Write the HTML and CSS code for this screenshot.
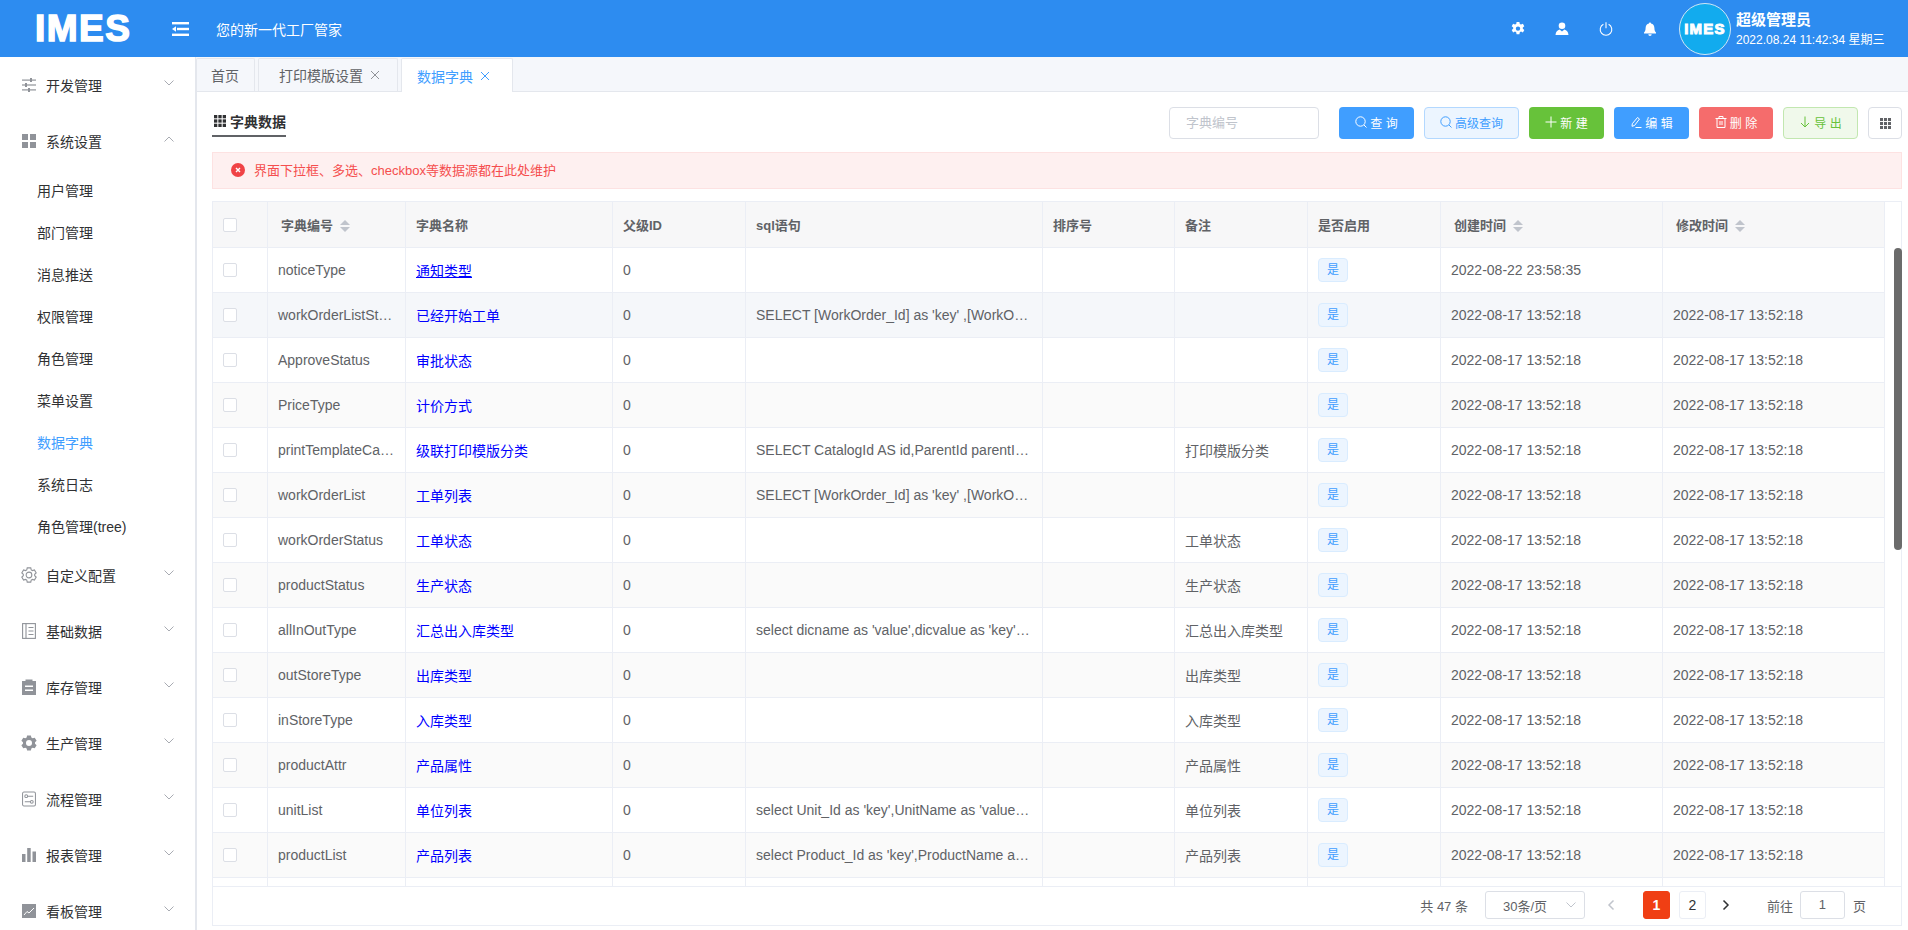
FILE: index.html
```html
<!DOCTYPE html>
<html lang="zh-CN">
<head>
  <meta charset="UTF-8">
  <meta name="viewport" content="width=device-width, initial-scale=1.0">
  <title>数据字典</title>
  <link rel="stylesheet" href="styles.css">
</head>
<body>
  <header class="topbar">
    <div class="logo">IMES</div>
    <svg class="toggle" viewBox="0 0 17 14" fill="#fff"><rect width="17" height="2.4"/><rect x="5" y="5.8" width="12" height="2.4"/><rect y="11.6" width="17" height="2.4"/><path d="M4 4.2v5.6L0 7z"/></svg>
    <div class="slogan">您的新一代工厂管家</div>
    <div class="top-actions">
      <svg class="top-icon" viewBox="0 0 14 14" fill="#fff"><path fill-rule="evenodd" d="M5.600 0h2.800l.4 2 1.200.6 1.900-.8 1.400 2.400-1.500 1.300v1.200l1.500 1.300-1.400 2.400-1.900-.8-1.200.6-.4 2H5.600l-.4-2-1.200-.6-1.900.8L.7 8l1.500-1.300V5.500L.7 4.200l1.400-2.400 1.900.8 1.200-.6zM7 4.400a2.200 2.200 0 1 0 0 4.400 2.200 2.200 0 0 0 0-4.400z"/></svg>
      <svg class="top-icon" viewBox="0 0 14 14" fill="#fff"><circle cx="7" cy="3.800" r="3.300"/><path d="M4.600 7.600 7 9.600l2.400-2c2.200.5 3.800 2.400 4.100 5.400H.5c.3-3 1.900-4.900 4.100-5.400z"/></svg>
      <svg class="top-icon" viewBox="0 0 14 14" fill="none" stroke="#fff" stroke-width="1.100"><path d="M4.400 2.300a5.800 5.800 0 1 0 5.200 0"/><path d="M7 .2v6"/></svg>
      <svg class="top-icon" viewBox="0 0 14 14" fill="#fff"><path d="M7 .6c.6 0 1 .4 1 1 2.200.5 3.400 2.300 3.400 4.400 0 2.400.6 3.600 1.600 4.600v.8H1v-.8C2 9.600 2.600 8.400 2.600 6c0-2.100 1.200-3.900 3.400-4.400 0-.6.400-1 1-1zM5.300 12.200h3.400a1.700 1.700 0 0 1-3.400 0z"/></svg>
    </div>
    <div class="avatar"><span class="avatar-logo">IMES</span></div>
    <div class="user-info">
      <div class="user-name">超级管理员</div>
      <div class="user-time">2022.08.24 11:42:34 星期三</div>
    </div>
  </header>

  <div class="layout">
    <aside class="sidebar">
      <div class="menu-group">
        <svg class="menu-icon" viewBox="0 0 14 14" fill="#909399"><rect y="1.500" width="14" height="1.200"/><rect x="8" y="0" width="2" height="4"/><rect y="6.400" width="14" height="1.200"/><rect x="3" y="5" width="2" height="4"/><rect y="11.300" width="14" height="1.200"/><rect x="6" y="10" width="2" height="4"/></svg>
        <span>开发管理</span>
        <svg class="menu-arrow" viewBox="0 0 10 6" fill="none" stroke="#a8abb2"><path d="M.5.500 5 5 9.500.500"/></svg>
      </div>
      <div class="menu-group">
        <svg class="menu-icon" viewBox="0 0 14 14" fill="#909399"><rect width="6" height="6"/><rect x="8" width="6" height="6"/><rect y="8" width="6" height="6"/><rect x="8" y="8" width="6" height="6"/></svg>
        <span>系统设置</span>
        <svg class="menu-arrow" viewBox="0 0 10 6" fill="none" stroke="#a8abb2"><path d="M.5 5.500 5 1l4.500 4.500"/></svg>
      </div>
      <a class="menu-item">用户管理</a>
      <a class="menu-item">部门管理</a>
      <a class="menu-item">消息推送</a>
      <a class="menu-item">权限管理</a>
      <a class="menu-item">角色管理</a>
      <a class="menu-item">菜单设置</a>
      <a class="menu-item active">数据字典</a>
      <a class="menu-item">系统日志</a>
      <a class="menu-item">角色管理(tree)</a>
      <div class="menu-group">
        <svg class="menu-icon menu-icon-lg" viewBox="-1 -1 18 18" fill="none" stroke="#909399" stroke-width="1.200"><path d="M6 0h4l.5 2.200 1.400.8 2.200-.7 2 3.400-1.700 1.500v1.600l1.700 1.500-2 3.400-2.200-.7-1.400.8L10 16H6l-.5-2.200-1.400-.8-2.200.7-2-3.400 1.700-1.500V7.200L-.1 5.700l2-3.400 2.200.7 1.400-.8z"/><circle cx="8" cy="8" r="3.200"/></svg>
        <span>自定义配置</span>
        <svg class="menu-arrow" viewBox="0 0 10 6" fill="none" stroke="#a8abb2"><path d="M.5.500 5 5 9.500.500"/></svg>
      </div>
      <div class="menu-group">
        <svg class="menu-icon menu-icon-tall" viewBox="0 0 14 16" fill="none" stroke="#909399" stroke-width="1.100"><rect x=".6" y=".6" width="12.800" height="14.800"/><path d="M4 .6v14.800M6.500 4.500h5M6.500 8h5M6.500 11.500h5"/></svg>
        <span>基础数据</span>
        <svg class="menu-arrow" viewBox="0 0 10 6" fill="none" stroke="#a8abb2"><path d="M.5.500 5 5 9.500.500"/></svg>
      </div>
      <div class="menu-group">
        <svg class="menu-icon menu-icon-tall" viewBox="0 0 14 16" fill="#909399"><path fill-rule="evenodd" d="M0 2h3.500V.5h7V2H14v14H0zM3 6.500v1.400h8V6.500zM3 10.500v1.400h8v-1.400z"/></svg>
        <span>库存管理</span>
        <svg class="menu-arrow" viewBox="0 0 10 6" fill="none" stroke="#a8abb2"><path d="M.5.500 5 5 9.500.500"/></svg>
      </div>
      <div class="menu-group">
        <svg class="menu-icon menu-icon-lg" viewBox="-.5 0 17 16" fill="#909399"><path fill-rule="evenodd" d="M6 0h4l.5 2.200 1.400.8 2.200-.7 2 3.400-1.700 1.500v1.600l1.700 1.500-2 3.400-2.200-.7-1.400.8L10 16H6l-.5-2.200-1.400-.8-2.200.7-2-3.400 1.700-1.500V7.200L-.1 5.700l2-3.400 2.200.7 1.400-.8zM8 4.800a3.200 3.200 0 1 0 0 6.400 3.200 3.200 0 0 0 0-6.400z"/></svg>
        <span>生产管理</span>
        <svg class="menu-arrow" viewBox="0 0 10 6" fill="none" stroke="#a8abb2"><path d="M.5.500 5 5 9.500.500"/></svg>
      </div>
      <div class="menu-group">
        <svg class="menu-icon menu-icon-tall" viewBox="0 0 15 16" fill="none" stroke="#909399" stroke-width="1.100"><rect x=".6" y=".6" width="13.800" height="14.800" rx="1.500"/><circle cx="4.500" cy="5" r="1.500"/><path d="M6 5h6M3 11h6"/><circle cx="10.500" cy="11" r="1.500"/></svg>
        <span>流程管理</span>
        <svg class="menu-arrow" viewBox="0 0 10 6" fill="none" stroke="#a8abb2"><path d="M.5.500 5 5 9.500.500"/></svg>
      </div>
      <div class="menu-group">
        <svg class="menu-icon" viewBox="0 0 14 14" fill="#909399"><rect y="6" width="3.500" height="8"/><rect x="5.200" width="3.500" height="14"/><rect x="10.500" y="3.500" width="3.500" height="10.500"/></svg>
        <span>报表管理</span>
        <svg class="menu-arrow" viewBox="0 0 10 6" fill="none" stroke="#a8abb2"><path d="M.5.500 5 5 9.500.500"/></svg>
      </div>
      <div class="menu-group">
        <svg class="menu-icon" viewBox="0 0 14 14"><rect width="14" height="14" fill="#909399"/><path d="M2 11l3-3.500 2 1.500 5-5" fill="none" stroke="#fff"/></svg>
        <span>看板管理</span>
        <svg class="menu-arrow" viewBox="0 0 10 6" fill="none" stroke="#a8abb2"><path d="M.5.500 5 5 9.500.500"/></svg>
      </div>
    </aside>

    <main class="main">
      <nav class="tabs">
        <div class="tab tab-home">首页</div>
        <div class="tab tab-print">打印模版设置<svg class="tab-close" viewBox="0 0 10 10" fill="none" stroke="#909399"><path d="M1 1l8 8M9 1l-8 8"/></svg></div>
        <div class="tab tab-active">数据字典<svg class="tab-close" viewBox="0 0 10 10" fill="none" stroke="#409eff"><path d="M1 1l8 8M9 1l-8 8"/></svg></div>
      </nav>

      <section class="panel">
        <div class="toolbar">
          <div class="panel-title">
            <svg class="title-icon" viewBox="0 0 12 12" fill="#303133"><rect width="3.300" height="3.300"/><rect x="4.350" width="3.300" height="3.300"/><rect x="8.700" width="3.300" height="3.300"/><rect y="4.350" width="3.300" height="3.300"/><rect x="4.350" y="4.350" width="3.300" height="3.300"/><rect x="8.700" y="4.350" width="3.300" height="3.300"/><rect y="8.700" width="3.300" height="3.300"/><rect x="4.350" y="8.700" width="3.300" height="3.300"/><rect x="8.700" y="8.700" width="3.300" height="3.300"/></svg>
            字典数据
          </div>
          <div class="actions">
            <div class="search-input">字典编号</div>
            <button class="btn btn-primary"><svg class="btn-icon" viewBox="0 0 12 12" fill="none" stroke="currentColor"><circle cx="5.500" cy="5.500" r="4.700"/><path d="M9 9l2.500 2.500"/></svg>查 询</button>
            <button class="btn btn-primary-plain btn-wide"><svg class="btn-icon" viewBox="0 0 12 12" fill="none" stroke="currentColor"><circle cx="5.500" cy="5.500" r="4.700"/><path d="M9 9l2.500 2.500"/></svg>高级查询</button>
            <button class="btn btn-success"><svg class="btn-icon" viewBox="0 0 12 12" fill="none" stroke="currentColor"><path d="M6 .5v11M.5 6h11"/></svg>新 建</button>
            <button class="btn btn-primary"><svg class="btn-icon" viewBox="0 0 12 12" fill="none" stroke="currentColor"><path d="M7.500 1.500l2 1.500-5 6.500-2.500.8.300-2.600zM5.500 11.500h6"/></svg>编 辑</button>
            <button class="btn btn-danger"><svg class="btn-icon" viewBox="0 0 12 12" fill="none" stroke="currentColor"><path d="M.5 2.500h11M4 2.500v-2h4v2M2 2.500v9h8v-9M5 5v4M7 5v4"/></svg>删 除</button>
            <button class="btn btn-success-plain"><svg class="btn-icon" viewBox="0 0 12 12" fill="none" stroke="currentColor"><path d="M6 .5v10.500M2 7l4 4 4-4"/></svg>导 出</button>
            <button class="btn btn-grid"><svg class="title-icon" viewBox="0 0 12 12" fill="#606266"><rect width="3.300" height="3.300"/><rect x="4.350" width="3.300" height="3.300"/><rect x="8.700" width="3.300" height="3.300"/><rect y="4.350" width="3.300" height="3.300"/><rect x="4.350" y="4.350" width="3.300" height="3.300"/><rect x="8.700" y="4.350" width="3.300" height="3.300"/><rect y="8.700" width="3.300" height="3.300"/><rect x="4.350" y="8.700" width="3.300" height="3.300"/><rect x="8.700" y="8.700" width="3.300" height="3.300"/></svg></button>
          </div>
        </div>

        <div class="alert">
          <svg class="alert-icon" viewBox="0 0 14 14"><circle cx="7" cy="7" r="7" fill="#f04346"/><path d="M5 5l4 4M9 5l-4 4" stroke="#fff" stroke-width="1.400"/></svg>
          界面下拉框、多选、checkbox等数据源都在此处维护
        </div>

        <div class="table-box">
          <div class="table-scroll">
            <div class="table-clip">
              <table class="dict-table">
                <colgroup>
                  <col class="col-check"><col class="col-code"><col class="col-name"><col class="col-parent"><col class="col-sql"><col class="col-sort"><col class="col-remark"><col class="col-enable"><col class="col-time"><col class="col-time">
                </colgroup>
                <thead>
                  <tr>
                    <th><span class="check"></span></th>
                    <th class="th-indent">字典编号<span class="sorter"></span></th>
                    <th>字典名称</th>
                    <th>父级ID</th>
                    <th>sql语句</th>
                    <th>排序号</th>
                    <th>备注</th>
                    <th>是否启用</th>
                    <th class="th-indent">创建时间<span class="sorter"></span></th>
                    <th class="th-indent">修改时间<span class="sorter"></span></th>
                  </tr>
                </thead>
                <tbody>
                  <tr><td><span class="check"></span></td><td class="td-code">noticeType</td><td><a class="link-hover" href="#">通知类型</a></td><td>0</td><td></td><td></td><td></td><td><span class="tag">是</span></td><td>2022-08-22 23:58:35</td><td></td></tr>
                  <tr class="row-hover"><td><span class="check"></span></td><td class="td-code">workOrderListStarted</td><td><a href="#">已经开始工单</a></td><td>0</td><td>SELECT [WorkOrder_Id] as 'key' ,[WorkOrder_No] as 'value' FROM</td><td></td><td></td><td><span class="tag">是</span></td><td>2022-08-17 13:52:18</td><td>2022-08-17 13:52:18</td></tr>
                  <tr><td><span class="check"></span></td><td class="td-code">ApproveStatus</td><td><a href="#">审批状态</a></td><td>0</td><td></td><td></td><td></td><td><span class="tag">是</span></td><td>2022-08-17 13:52:18</td><td>2022-08-17 13:52:18</td></tr>
                  <tr><td><span class="check"></span></td><td class="td-code">PriceType</td><td><a href="#">计价方式</a></td><td>0</td><td></td><td></td><td></td><td><span class="tag">是</span></td><td>2022-08-17 13:52:18</td><td>2022-08-17 13:52:18</td></tr>
                  <tr><td><span class="check"></span></td><td class="td-code">printTemplateCatalog</td><td><a href="#">级联打印模版分类</a></td><td>0</td><td>SELECT CatalogId AS id,ParentId parentId,CatalogName AS name</td><td></td><td>打印模版分类</td><td><span class="tag">是</span></td><td>2022-08-17 13:52:18</td><td>2022-08-17 13:52:18</td></tr>
                  <tr><td><span class="check"></span></td><td class="td-code">workOrderList</td><td><a href="#">工单列表</a></td><td>0</td><td>SELECT [WorkOrder_Id] as 'key' ,[WorkOrder_No] as 'value' FROM</td><td></td><td></td><td><span class="tag">是</span></td><td>2022-08-17 13:52:18</td><td>2022-08-17 13:52:18</td></tr>
                  <tr><td><span class="check"></span></td><td class="td-code">workOrderStatus</td><td><a href="#">工单状态</a></td><td>0</td><td></td><td></td><td>工单状态</td><td><span class="tag">是</span></td><td>2022-08-17 13:52:18</td><td>2022-08-17 13:52:18</td></tr>
                  <tr><td><span class="check"></span></td><td class="td-code">productStatus</td><td><a href="#">生产状态</a></td><td>0</td><td></td><td></td><td>生产状态</td><td><span class="tag">是</span></td><td>2022-08-17 13:52:18</td><td>2022-08-17 13:52:18</td></tr>
                  <tr><td><span class="check"></span></td><td class="td-code">allInOutType</td><td><a href="#">汇总出入库类型</a></td><td>0</td><td>select dicname as 'value',dicvalue as 'key' from sys_dictionary</td><td></td><td>汇总出入库类型</td><td><span class="tag">是</span></td><td>2022-08-17 13:52:18</td><td>2022-08-17 13:52:18</td></tr>
                  <tr><td><span class="check"></span></td><td class="td-code">outStoreType</td><td><a href="#">出库类型</a></td><td>0</td><td></td><td></td><td>出库类型</td><td><span class="tag">是</span></td><td>2022-08-17 13:52:18</td><td>2022-08-17 13:52:18</td></tr>
                  <tr><td><span class="check"></span></td><td class="td-code">inStoreType</td><td><a href="#">入库类型</a></td><td>0</td><td></td><td></td><td>入库类型</td><td><span class="tag">是</span></td><td>2022-08-17 13:52:18</td><td>2022-08-17 13:52:18</td></tr>
                  <tr><td><span class="check"></span></td><td class="td-code">productAttr</td><td><a href="#">产品属性</a></td><td>0</td><td></td><td></td><td>产品属性</td><td><span class="tag">是</span></td><td>2022-08-17 13:52:18</td><td>2022-08-17 13:52:18</td></tr>
                  <tr><td><span class="check"></span></td><td class="td-code">unitList</td><td><a href="#">单位列表</a></td><td>0</td><td>select Unit_Id as 'key',UnitName as 'value' from Sys_Unit</td><td></td><td>单位列表</td><td><span class="tag">是</span></td><td>2022-08-17 13:52:18</td><td>2022-08-17 13:52:18</td></tr>
                  <tr><td><span class="check"></span></td><td class="td-code">productList</td><td><a href="#">产品列表</a></td><td>0</td><td>select Product_Id as 'key',ProductName as 'value' from Product</td><td></td><td>产品列表</td><td><span class="tag">是</span></td><td>2022-08-17 13:52:18</td><td>2022-08-17 13:52:18</td></tr>
                  <tr><td></td><td></td><td></td><td></td><td></td><td></td><td></td><td></td><td></td><td></td></tr>
                </tbody>
              </table>
            </div>
            <div class="scroll-gutter"><div class="scroll-thumb"></div></div>
          </div>

          <footer class="pager">
            <span>共 47 条</span>
            <div class="page-size">30条/页<svg class="page-size-arrow" viewBox="0 0 10 6" fill="none" stroke="#c0c4cc"><path d="M.5.500 5 5 9.500.500"/></svg></div>
            <svg class="page-arrow page-prev" viewBox="0 0 8 12" fill="none" stroke="#c0c4cc" stroke-width="1.500"><path d="M6.500 1.500 2 6l4.500 4.500"/></svg>
            <div class="page-num page-current">1</div>
            <div class="page-num">2</div>
            <svg class="page-arrow page-next" viewBox="0 0 8 12" fill="none" stroke="#303133" stroke-width="1.500"><path d="M1.500 1.500 6 6l-4.500 4.500"/></svg>
            <span class="goto-label">前往</span>
            <div class="goto-input">1</div>
            <span class="goto-unit">页</span>
          </footer>
        </div>
      </section>
    </main>
  </div>
</body>
</html>
```

FILE: styles.css
```css
* {
  box-sizing: border-box;
}

html, body {
  height: 100%;
}

body {
  margin: 0;
  display: flex;
  flex-direction: column;
  overflow: hidden;
  font-family: "Liberation Sans", "Noto Sans CJK SC", sans-serif;
  font-size: 14px;
  color: #606266;
  background-color: #fff;
}

/* top bar */
.topbar {
  flex: 0 0 57px;
  display: flex;
  align-items: center;
  background-color: #2d8cf0;
  color: #fff;
}

.logo {
  width: 172px;
  padding-left: 35px;
  font-size: 37px;
  line-height: 37px;
  font-weight: bold;
  letter-spacing: 1.5px;
  -webkit-text-stroke: 1.5px #fff;
}

.toggle {
  width: 17px;
  height: 14px;
}

.slogan {
  margin-left: 27px;
}

.top-actions {
  margin-left: auto;
  display: flex;
  gap: 30px;
}

.top-icon {
  width: 14px;
  height: 14px;
  display: block;
}

.avatar {
  width: 52px;
  height: 52px;
  margin-left: 22px;
  display: flex;
  align-items: center;
  justify-content: center;
  border: 1.5px solid #cfe6f5;
  border-radius: 50%;
  background-color: #12abee;
}

.avatar-logo {
  font-size: 15px;
  font-weight: bold;
  letter-spacing: 1.2px;
  -webkit-text-stroke: 1px #fff;
}

.user-info {
  width: 177px;
  padding-left: 5px;
}

.user-name {
  font-size: 15px;
  line-height: 20px;
  font-weight: bold;
}

.user-time {
  margin-top: 2px;
  font-size: 12px;
  line-height: 16px;
}

.layout {
  flex: 1;
  display: flex;
  min-height: 0;
}

/* sidebar */
.sidebar {
  flex: 0 0 197px;
  padding-top: 1px;
  overflow: hidden;
  border-right: 2px solid #e4e7ed;
  color: #303133;
}

.menu-group {
  height: 56px;
  display: flex;
  align-items: center;
  padding-left: 22px;
  padding-bottom: 2px;
}

.menu-icon {
  width: 14px;
  height: 14px;
  margin-right: 10px;
  flex-shrink: 0;
}

.menu-icon-lg {
  width: 16px;
  height: 16px;
  margin-left: -1px;
  margin-right: 9px;
}

.menu-icon-tall {
  height: 16px;
}

.menu-arrow {
  width: 10px;
  height: 6px;
  margin-left: auto;
  margin-right: 21px;
  margin-bottom: 4px;
}

.menu-item {
  display: block;
  height: 42px;
  line-height: 42px;
  padding-left: 37px;
}

.menu-item.active {
  color: #409eff;
}

/* tabs */
.main {
  flex: 1;
  min-width: 0;
  display: flex;
  flex-direction: column;
}

.tabs {
  flex: 0 0 35px;
  display: flex;
  gap: 3px;
  padding-top: 1px;
  margin-left: -1px;
  background-color: #f5f7fb;
  border-bottom: 1px solid #e4e7ed;
}

.tab {
  height: 33px;
  display: flex;
  align-items: center;
  border: 1px solid #e4e7ed;
  border-bottom: 0;
  border-radius: 2px 2px 0 0;
}

.tab-home {
  padding: 0 15px 0 14px;
}

.tab-print {
  padding: 0 17px 0 20px;
}

.tab-active {
  padding: 0 22px 0 15px;
  height: 34px;
  margin-bottom: -1px;
  color: #409eff;
  background-color: #fff;
}

.tab-close {
  width: 10px;
  height: 10px;
  margin-left: 7px;
}

/* panel */
.panel {
  flex: 1;
  min-height: 0;
  display: flex;
  flex-direction: column;
  padding: 15px 6px 4px 15px;
}

.toolbar {
  flex: 0 0 32px;
  display: flex;
  justify-content: space-between;
  margin-bottom: 13px;
}

.panel-title {
  width: 74px;
  height: 30px;
  display: flex;
  align-items: center;
  gap: 4px;
  padding-left: 2px;
  border-bottom: 2px solid #606266;
  font-weight: bold;
  color: #303133;
}

.title-icon {
  width: 12px;
  height: 12px;
  display: block;
  flex-shrink: 0;
}

.actions {
  display: flex;
  gap: 10px;
}

.search-input {
  width: 150px;
  height: 32px;
  margin-right: 10px;
  padding-left: 16px;
  line-height: 30px;
  font-size: 13px;
  color: #c0c4cc;
  border: 1px solid #dcdfe6;
  border-radius: 4px;
}

.btn {
  width: 75px;
  height: 32px;
  display: flex;
  align-items: center;
  justify-content: center;
  padding: 0 0 2px;
  font-family: inherit;
  font-size: 12px;
  border: 1px solid transparent;
  border-radius: 4px;
  color: #fff;
}

.btn-icon {
  width: 12px;
  height: 12px;
  margin-right: 3px;
  flex-shrink: 0;
}

.btn-wide {
  width: 95px;
}

.btn-primary {
  background-color: #409eff;
}

.btn-primary-plain {
  color: #409eff;
  background-color: #ecf5ff;
  border-color: #b3d8ff;
}

.btn-success {
  background-color: #67c23a;
}

.btn-danger {
  width: 74px;
  background-color: #f56c6c;
}

.btn-success-plain {
  color: #67c23a;
  background-color: #f0f9eb;
  border-color: #c2e7b0;
}

.btn-grid {
  width: 34px;
  padding: 0;
  background-color: #fff;
  border-color: #dcdfe6;
}

.btn-grid .title-icon {
  width: 11px;
  height: 11px;
}

/* alert */
.alert {
  flex: 0 0 37px;
  display: flex;
  align-items: center;
  padding-left: 18px;
  padding-bottom: 2px;
  margin-bottom: 12px;
  font-size: 13px;
  color: #f54e4e;
  background-color: #fef0f0;
  border: 1px solid #fde2e2;
}

.alert-icon {
  width: 14px;
  height: 14px;
  margin-right: 9px;
}

/* table */
.table-box {
  flex: 1;
  min-height: 0;
  display: flex;
  flex-direction: column;
  border: 1px solid #ebeef5;
}

.table-scroll {
  flex: 1;
  min-height: 0;
  display: flex;
}

.table-clip {
  flex: 0 0 1672px;
  overflow: hidden;
}

.dict-table {
  width: 1672px;
  table-layout: fixed;
  border-collapse: separate;
  border-spacing: 0;
  font-size: 14px;
}

.col-check { width: 55px; }
.col-code { width: 138px; }
.col-name { width: 207px; }
.col-parent { width: 133px; }
.col-sql { width: 297px; }
.col-sort { width: 132px; }
.col-remark { width: 133px; }
.col-enable { width: 133px; }
.col-time { width: 222px; }

.dict-table th, .dict-table td {
  padding: 0 12px 0 10px;
  text-align: left;
  white-space: nowrap;
  overflow: hidden;
  text-overflow: ellipsis;
  border-right: 1px solid #ebeef5;
  border-bottom: 1px solid #ebeef5;
}

.dict-table th {
  height: 46px;
  font-size: 13px;
  font-weight: bold;
  background-color: #f7f7f8;
}

.dict-table th.th-indent {
  padding-left: 13px;
}

.dict-table td {
  height: 45px;
}

.dict-table td.td-code {
  padding-right: 9px;
}

.dict-table tbody tr:nth-child(even) td {
  background-color: #fafafa;
}

.dict-table tbody tr.row-hover td {
  background-color: #f5f7fa;
}

.dict-table a {
  color: #0000ff;
  text-decoration: none;
}

.dict-table a.link-hover {
  text-decoration: underline;
  text-underline-offset: 1px;
}

.check {
  display: block;
  width: 14px;
  height: 14px;
  background-color: #fff;
  border: 1px solid #dcdfe6;
  border-radius: 2px;
}

.sorter {
  display: inline-block;
  position: relative;
  width: 10px;
  height: 12px;
  margin-left: 7px;
  vertical-align: -2px;
}

.sorter::before, .sorter::after {
  content: "";
  position: absolute;
  left: 0;
  border-left: 5px solid transparent;
  border-right: 5px solid transparent;
}

.sorter::before {
  top: 0;
  border-bottom: 5px solid #c0c4cc;
}

.sorter::after {
  bottom: 0;
  border-top: 5px solid #c0c4cc;
}

.tag {
  display: block;
  width: 30px;
  height: 24px;
  line-height: 22px;
  text-align: center;
  font-size: 12px;
  color: #409eff;
  background-color: #ecf5ff;
  border: 1px solid #d9ecff;
  border-radius: 4px;
}

.scroll-gutter {
  flex: 1;
  padding: 46px 0 0 9px;
}

.scroll-thumb {
  width: 8px;
  height: 302px;
  background-color: #6b6b6b;
  border-radius: 4px;
}

/* pagination */
.pager {
  flex: 0 0 39px;
  display: flex;
  align-items: center;
  justify-content: flex-end;
  padding-right: 35px;
  padding-bottom: 2px;
  font-size: 13px;
  border-top: 1px solid #ebeef5;
}

.page-size {
  width: 100px;
  height: 28px;
  margin-left: 17px;
  display: flex;
  align-items: center;
  justify-content: space-between;
  padding: 0 8px 0 17px;
  border: 1px solid #dcdfe6;
  border-radius: 3px;
}

.page-size-arrow {
  width: 10px;
  height: 6px;
}

.page-arrow {
  width: 8px;
  height: 12px;
}

.page-prev {
  margin-left: 22px;
  margin-right: 19px;
}

.page-next {
  margin-left: 16px;
}

.page-num {
  width: 27px;
  height: 28px;
  margin-left: 9px;
  line-height: 26px;
  text-align: center;
  font-size: 14px;
  color: #303133;
  border: 1px solid #ebeef5;
  border-radius: 3px;
}

.page-current {
  color: #fff;
  font-weight: bold;
  background-color: #f03f14;
  border-color: #f03f14;
}

.goto-label {
  margin-left: 37px;
}

.goto-input {
  width: 45px;
  height: 28px;
  margin-left: 7px;
  line-height: 26px;
  text-align: center;
  border: 1px solid #dcdfe6;
  border-radius: 3px;
}

.goto-unit {
  margin-left: 8px;
}
```
